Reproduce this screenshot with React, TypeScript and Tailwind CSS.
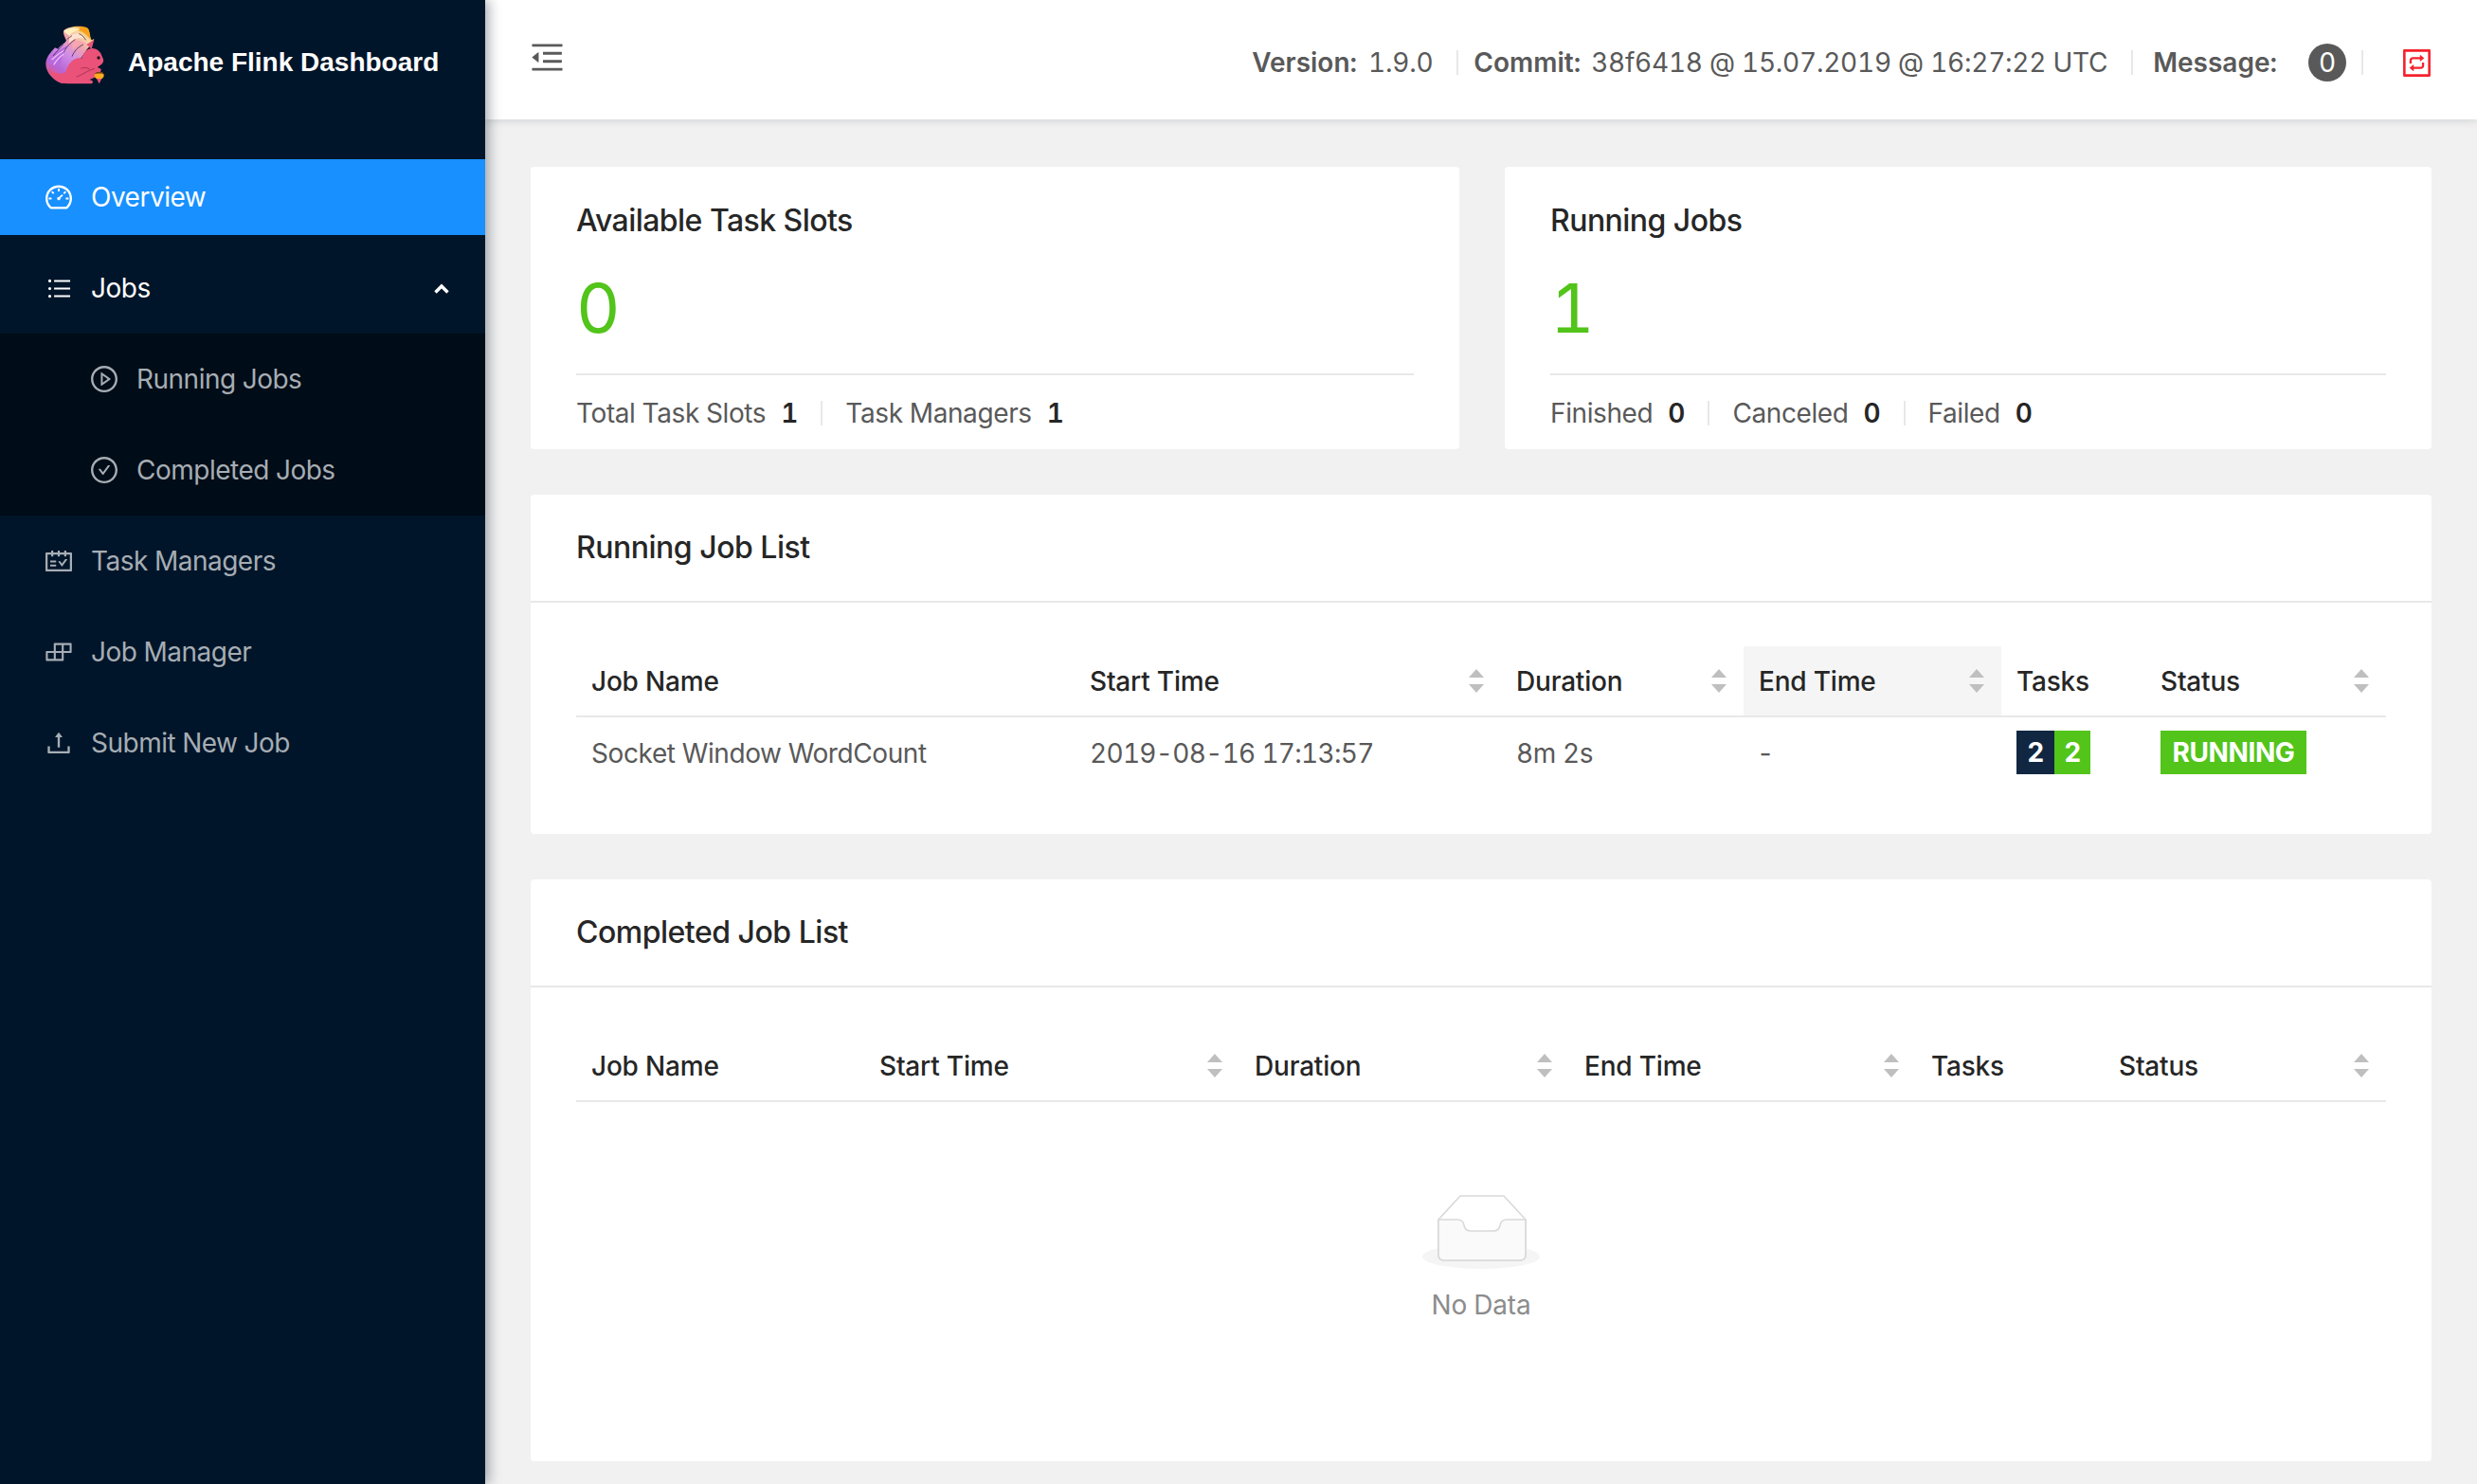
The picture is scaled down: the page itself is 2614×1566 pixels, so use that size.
import React from "react";
import {
  AiOutlineDashboard,
  AiOutlineBars,
  AiOutlinePlayCircle,
  AiOutlineCheckCircle,
  AiOutlineSchedule,
  AiOutlineBuild,
  AiOutlineUpload,
  AiOutlineMenuFold,
  AiOutlineInteraction,
} from "react-icons/ai";

function Logo({ className }: { className?: string }) {
  return (
    <svg viewBox="58 52 186 186" className={className}>
      <defs>
        <linearGradient id="tail" x1="0.15" y1="0.95" x2="0.75" y2="0">
          <stop offset="0" stopColor="#e8557a" />
          <stop offset="0.22" stopColor="#b765d6" />
          <stop offset="0.5" stopColor="#d08fe6" />
          <stop offset="0.7" stopColor="#f0a0b0" />
          <stop offset="0.88" stopColor="#fbd9a8" />
          <stop offset="1" stopColor="#fba91e" />
        </linearGradient>
      </defs>
      <path d="M112 236 C84 228 58 200 59 172 C60 150 76 136 88 122 L98 126 C106 112 116 112 124 100 C120 88 112 78 116 68 C130 54 172 50 192 60 C200 72 198 88 204 98 L212 94 C208 108 200 116 190 126 L160 170 L130 220 Z" fill="url(#tail)" />
      <path d="M116 68 C130 58 154 58 170 64 C158 66 142 72 134 84 C128 80 120 76 116 68 Z" fill="#fff0bd" />
      <path d="M168 56 C180 56 192 60 194 64 C200 78 198 90 202 100 C194 86 184 74 164 68 Z" fill="#f9a01b" />
      <path d="M134 86 C150 72 172 76 184 94 C168 88 150 92 132 108 Z" fill="#fde2cf" />
      <path d="M142 104 C154 96 176 100 190 112 C172 108 156 114 144 128 Z" fill="#f7a5b0" />
      <path d="M66 176 C72 150 96 130 128 116 C116 138 108 152 106 178 C92 168 78 170 66 176 Z" fill="#b96ae0" />
      <path d="M78 160 C92 146 106 136 122 128 M84 176 C94 160 104 150 116 142" stroke="#eec4f4" strokeWidth="3.5" fill="none" />
      <path d="M114 112 C106 122 92 134 82 148 M152 96 C138 106 124 118 116 136 M178 112 C160 120 148 134 142 150 M126 96 C130 92 136 88 142 84 M164 78 C172 80 180 88 186 98" stroke="#2a1030" strokeWidth="2" fill="none" />
      <path d="M188 112 L212 96 L204 126 Z" fill="#e8557a" />
      <path d="M66 186 C74 216 100 236 130 236 L204 236 C212 232 208 224 196 224 L214 216 C226 210 234 200 234 190 C230 186 226 186 222 184 L236 174 C244 168 242 158 238 152 C234 136 222 124 206 124 C190 124 178 138 172 156 C150 150 128 172 122 200 C104 208 82 204 66 186 Z" fill="#ea5279" />
      <path d="M156 214 C172 210 186 196 214 188 M170 188 C178 184 190 184 198 190" stroke="#8c2645" strokeWidth="2" fill="none" />
      <circle cx="226" cy="154" r="5" fill="#20101a" />
      <ellipse cx="228" cy="210" rx="15" ry="12" fill="#fbab1f" />
      <path d="M213 206 C218 196 238 196 243 206 C236 203 220 203 213 206 Z" fill="#7a3b14" />
      <path d="M220 220 L236 220 L228 236 Z" fill="#ea5279" />
    </svg>
  );
}

function SideItem({
  icon,
  label,
  active,
  sub,
  right,
  white,
  className,
}: {
  icon: React.ReactNode;
  label: string;
  active?: boolean;
  sub?: boolean;
  right?: React.ReactNode;
  white?: boolean;
  className?: string;
}) {
  return (
    <div
      className={`h-20 flex items-center text-[28px] tracking-[-0.5px] ${sub ? "pl-[94px]" : "pl-[46px]"} pr-[38px] ${
        active ? "bg-[#1890ff] text-white" : white ? "text-white" : "text-[#a6adb4]"
      } ${className ?? ""}`}
    >
      <span className="w-8 h-8 flex items-center justify-center text-[32px] mr-[18px] shrink-0">{icon}</span>
      <span className="flex-1">{label}</span>
      {right}
    </div>
  );
}

function Carets() {
  return (
    <svg viewBox="0 0 16 26" className="w-4 h-[26px] shrink-0" fill="#bfbfbf">
      <path d="M8 0 L16 9 L0 9 Z" />
      <path d="M0 16 L16 16 L8 25 Z" />
    </svg>
  );
}

function Th({ label, sort, active }: { label: string; sort?: boolean; active?: boolean }) {
  return (
    <th className={`h-[74px] px-4 p-0 border-b-2 border-[#e8e8e8] font-medium text-left tracking-[-0.2px] ${active ? "bg-[#f5f5f5]" : ""}`}>
      <div className="flex items-center justify-between pr-[2px]">
        <span>{label}</span>
        {sort && <Carets />}
      </div>
    </th>
  );
}

function Sep({ className }: { className?: string }) {
  return <span className={`w-[2px] bg-[#e8e8e8] ${className ?? ""}`} />;
}

function Stat({ label, value, sep }: { label: string; value: string; sep?: boolean }) {
  return (
    <div className="flex items-center">
      {sep && <Sep className="h-[26px] mx-[24px]" />}
      <span className="text-[#595959] tracking-[-0.4px]">{label}</span>
      <span className="ml-[16px] font-semibold text-[#262626]">{value}</span>
    </div>
  );
}

function StatCard({
  title,
  value,
  stats,
  className,
}: {
  title: string;
  value: string;
  stats: { label: string; value: string }[];
  className?: string;
}) {
  return (
    <div className={`h-[298px] bg-white rounded-[4px] px-12 pt-[35px] ${className ?? ""}`}>
      <div className="h-11 leading-[44px] text-[32px] font-medium text-[#262626] tracking-[-0.55px]">{title}</div>
      <div className="mt-[26px] h-[88px] leading-[88px] text-[72px] text-[#52c41a]">{value}</div>
      <div className="mt-[25px] border-t-2 border-[#e8e8e8] pt-[23px] flex text-[28px] leading-[34px]">
        {stats.map((s, i) => (
          <Stat key={s.label} label={s.label} value={s.value} sep={i > 0} />
        ))}
      </div>
    </div>
  );
}

function ListCard({ title, children, className }: { title: string; children: React.ReactNode; className?: string }) {
  return (
    <div className={`bg-white rounded-[4px] ${className ?? ""}`}>
      <div className="h-[114px] border-b-2 border-[#e8e8e8] px-12 flex items-center text-[32px] font-medium text-[#262626] tracking-[-0.5px]">
        {title}
      </div>
      <div className="px-12 pt-[46px]">{children}</div>
    </div>
  );
}

export default function App() {
  return (
    <div className="w-[2614px] h-[1566px] overflow-hidden flex bg-[#f1f1f1] tabular-nums font-['Inter','Liberation_Sans',sans-serif]">
      <aside className="relative z-20 w-[512px] shrink-0 bg-[#001529] shadow-[4px_0_12px_rgba(0,21,41,0.35)]">
        <div className="h-[168px] pl-12 pt-[27px] flex items-start">
          <Logo className="w-[62px] h-[62px] shrink-0" />
          <span className="ml-[25px] mt-[21px] text-[28px] leading-[36px] font-bold text-white font-['Liberation_Sans',sans-serif]">
            Apache Flink Dashboard
          </span>
        </div>
        <SideItem active icon={<AiOutlineDashboard />} label="Overview" className="mb-4" />
        <SideItem
          white
          icon={<AiOutlineBars className="text-[29px]" />}
          label="Jobs"
          right={
            <svg viewBox="0 0 16 11" className="w-4 h-[11px]" fill="none" stroke="#fff" strokeWidth="3.4">
              <path d="M1.5 9.5 L8 3 L14.5 9.5" />
            </svg>
          }
        />
        <div className="mt-2 py-2 bg-[#000c17]">
          <SideItem sub icon={<AiOutlinePlayCircle />} label="Running Jobs" className="mb-4" />
          <SideItem sub icon={<AiOutlineCheckCircle />} label="Completed Jobs" />
        </div>
        <div className="pt-2">
          <SideItem icon={<AiOutlineSchedule />} label="Task Managers" className="mb-4" />
          <SideItem icon={<AiOutlineBuild />} label="Job Manager" className="mb-4" />
          <SideItem icon={<AiOutlineUpload />} label="Submit New Job" />
        </div>
      </aside>

      <main className="flex-1 min-w-0 flex flex-col">
        <header className="relative z-10 h-[126px] bg-white shadow-[0_2px_8px_rgba(0,21,41,0.12)] flex items-start pl-[45px] pr-[45px] text-[28px] text-[#595959]">
          <AiOutlineMenuFold className="mt-[40px] text-[41px] text-[#595959]" />
          <div className="ml-auto h-[126px] flex items-center pt-[6px]">
            <span className="font-semibold">Version:</span>
            <span className="ml-3 tracking-[-0.25px]">1.9.0</span>
            <Sep className="h-[26px] ml-[25px] mr-[16px]" />
            <span className="font-semibold">Commit:</span>
            <span className="ml-[11px] tracking-[-0.25px]">38f6418 @ 15.07.2019 @ 16:27:22 UTC</span>
            <Sep className="h-[26px] ml-[25px] mr-[21px]" />
            <span className="font-semibold">Message:</span>
            <span className="ml-[33px] w-10 h-10 rounded-full bg-[#595959] text-white flex items-center justify-center">0</span>
            <Sep className="h-[26px] ml-4 mr-[38px]" />
            <AiOutlineInteraction className="text-[37px] text-[#f5222d]" />
          </div>
        </header>

        <div className="flex-1 min-h-0 px-12 pt-[50px] flex flex-col gap-12">
          <div className="flex gap-12">
            <StatCard
              className="w-[980px]"
              title="Available Task Slots"
              value="0"
              stats={[
                { label: "Total Task Slots", value: "1" },
                { label: "Task Managers", value: "1" },
              ]}
            />
            <StatCard
              className="flex-1"
              title="Running Jobs"
              value="1"
              stats={[
                { label: "Finished", value: "0" },
                { label: "Canceled", value: "0" },
                { label: "Failed", value: "0" },
              ]}
            />
          </div>

          <ListCard title="Running Job List" className="h-[358px]">
            <table className="w-full table-fixed border-collapse text-[28px] text-[#262626]">
              <colgroup>
                <col className="w-[526px]" />
                <col className="w-[450px]" />
                <col className="w-[256px]" />
                <col className="w-[272px]" />
                <col className="w-[152px]" />
                <col className="w-[254px]" />
              </colgroup>
              <thead>
                <tr>
                  <Th label="Job Name" />
                  <Th label="Start Time" sort />
                  <Th label="Duration" sort />
                  <Th label="End Time" sort active />
                  <Th label="Tasks" />
                  <Th label="Status" sort />
                </tr>
              </thead>
              <tbody className="text-[#595959] tracking-[-0.4px]">
                <tr>
                  <td className="h-[74px] px-4 pt-[2px]">Socket Window WordCount</td>
                  <td className="h-[74px] px-4 pt-[2px] tracking-[-0.7px]">2019-08-16 17:13:57</td>
                  <td className="h-[74px] px-4 pt-[2px]">8m 2s</td>
                  <td className="h-[74px] pl-[14px] pr-4 pt-[2px]">-</td>
                  <td className="h-[74px] px-4">
                    <div className="flex h-[46px] font-bold text-white text-center leading-[46px]">
                      <span className="w-10 bg-[#112641]">2</span>
                      <span className="w-[38px] bg-[#52c41a]">2</span>
                    </div>
                  </td>
                  <td className="h-[74px] px-4">
                    <span className="inline-block h-[46px] leading-[46px] w-[154px] text-center bg-[#52c41a] font-bold text-white">RUNNING</span>
                  </td>
                </tr>
              </tbody>
            </table>
          </ListCard>

          <ListCard title="Completed Job List" className="h-[614px]">
            <table className="w-full table-fixed border-collapse text-[28px] text-[#262626]">
              <colgroup>
                <col className="w-[304px]" />
                <col className="w-[396px]" />
                <col className="w-[348px]" />
                <col className="w-[366px]" />
                <col className="w-[198px]" />
                <col className="w-[298px]" />
              </colgroup>
              <thead>
                <tr>
                  <Th label="Job Name" />
                  <Th label="Start Time" sort />
                  <Th label="Duration" sort />
                  <Th label="End Time" sort />
                  <Th label="Tasks" />
                  <Th label="Status" sort />
                </tr>
              </thead>
            </table>
            <div className="mt-[98px] flex flex-col items-center">
              <svg viewBox="0 0 126 78" className="w-[126px] h-[78px]">
                <ellipse cx="63" cy="65" rx="62" ry="13" fill="#f5f5f5" />
                <path d="M18 26 L41 1 L87 1 L110 26 L110 63 Q110 69 104 69 L24 69 Q18 69 18 63 Z" fill="#fff" stroke="#d9d9d9" strokeWidth="1.6" strokeLinejoin="round" />
                <path d="M18 26 L38 26 Q44 26 45 32 Q46 38 52 38 L76 38 Q82 38 83 32 Q84 26 90 26 L110 26 L110 63 Q110 69 104 69 L24 69 Q18 69 18 63 Z" fill="#fafafa" stroke="#d9d9d9" strokeWidth="1.6" strokeLinejoin="round" />
              </svg>
              <div className="mt-[18px] text-[28px] leading-[40px] text-[#8c8c8c] tracking-[-0.2px]">No Data</div>
            </div>
          </ListCard>
        </div>
      </main>
    </div>
  );
}
